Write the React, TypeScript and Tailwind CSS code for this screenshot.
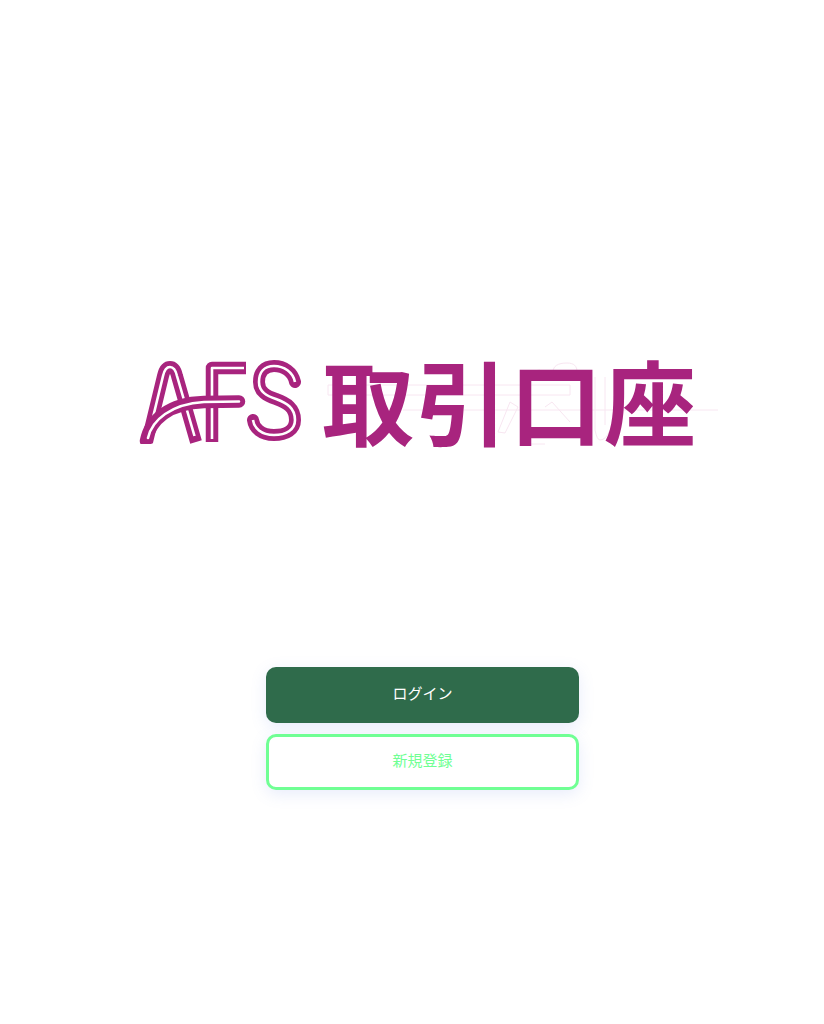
const MAGENTA = "#a8247e";

function AfsLogo() {
  return (
    <svg width="164" height="86" viewBox="139 358 164 86" fill="none" strokeLinejoin="round">
      <path d="M148 442L164 376Q166 367 171 367Q176 367 178 376L197 442" stroke={MAGENTA} strokeWidth="12" />
      <path d="M149.5 436L164 376Q166 367 171 367Q176 367 178 376L195.5 436" stroke="#fff" strokeWidth="2.6" />
      <path d="M213 442V368H247" stroke={MAGENTA} strokeWidth="12.5" />
      <path d="M213 439V368H245" stroke="#fff" strokeWidth="2.6" />
      <path d="M147 441C151 420 170 403 205 402L240 401.5" stroke={MAGENTA} strokeWidth="12.5" strokeLinecap="round" />
      <path d="M149 438C153 420 172 404 205 402L240 401.5" stroke="#fff" strokeWidth="2.6" strokeLinecap="round" />
      <path d="M296 382C294 372 285 366 275 366C265 366 260 372 260 382C260 392 268 396 277 399C288 403 296 408 296 420C296 430 287 435 275 435C262 435 255 428 254 420" stroke={MAGENTA} strokeWidth="12" strokeLinecap="round" />
      <path d="M296 382C294 372 285 366 275 366C265 366 260 372 260 382C260 392 268 396 277 399C288 403 296 408 296 420C296 430 287 435 275 435C262 435 255 428 254 420" stroke="#fff" strokeWidth="2.6" />
    </svg>
  );
}

export default function App() {
  return (
    <div className="min-h-[1024px] bg-white flex flex-col items-center">
      <div className="relative mt-[355px] w-[824px] h-[100px]">
        <svg className="absolute left-0 top-0" width="824" height="100" viewBox="0 355 824 100" fill="none" stroke="#f8e6f1" strokeWidth="1">
          <path d="M403 410H718M328 385H570V395H328ZM510 402L498 432L505 433L518 407ZM545 407L552 402L570 422M567 363C558 363 553 366 553 372M567 363C574 363 577 366 577 372M595 377V430Q597 440 600 440Q606 440 610 430M605 377V425M527 444H545M527 372L540 370" />
        </svg>
        <div className="relative flex items-start pl-[138px] pt-[3px] gap-[20px]">
          <AfsLogo />
          <span className="-mt-[13px] text-[92px] leading-[107px] tracking-[2px] font-bold text-[#a8247e] font-['Noto_Sans_CJK_JP',sans-serif]">取引口座</span>
        </div>
      </div>
      <div className="mt-[211.5px] ml-[21px] w-[313px] flex flex-col gap-[11px] font-['Liberation_Serif','Noto_Sans_CJK_JP',serif] text-[15px]">
        <button className="h-[56px] rounded-[10px] bg-[#2f6b4b] text-white shadow-[0_4px_16px_rgba(100,130,230,0.15)]">ログイン</button>
        <button className="h-[56px] rounded-[10px] bg-white border-[3px] border-[#70ff94] text-[#70ff94] shadow-[0_4px_16px_rgba(100,130,230,0.15)]">新規登録</button>
      </div>
    </div>
  );
}
